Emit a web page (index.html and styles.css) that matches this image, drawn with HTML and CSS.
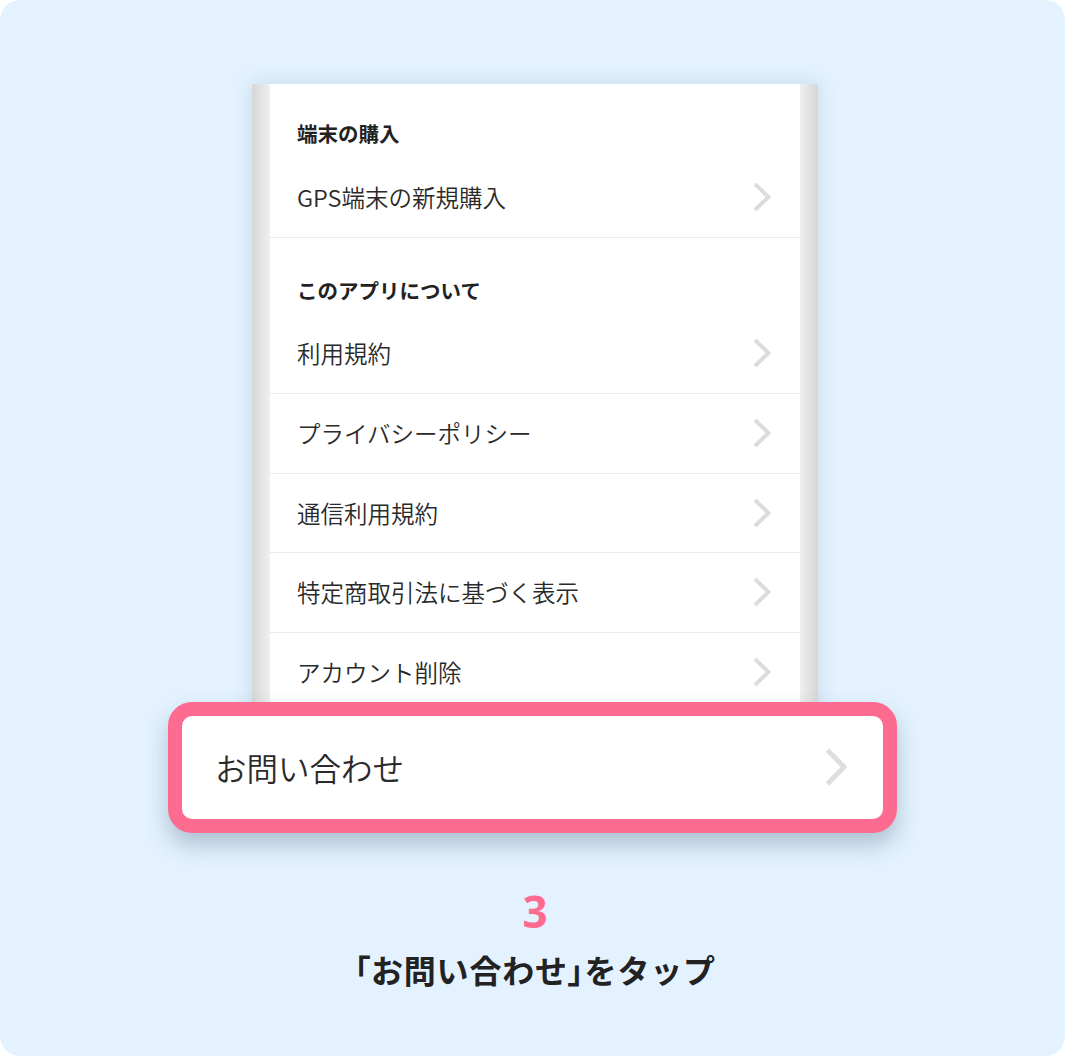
FILE: index.html
```html
<!DOCTYPE html>
<html lang="ja">
<head>
<meta charset="utf-8">
<link rel="stylesheet" href="styles.css">
</head>
<body>
<div class="card">
  <div class="phone">
    <div class="screen">
      <div class="section-title">端末の購入</div>
      <div class="row"><span>GPS端末の新規購入</span><svg class="chev" viewBox="0 0 18 30"><polyline points="2,2 15.5,15 2,28"/></svg></div>
      <div class="section-title">このアプリについて</div>
      <div class="row"><span>利用規約</span><svg class="chev" viewBox="0 0 18 30"><polyline points="2,2 15.5,15 2,28"/></svg></div>
      <div class="row"><span>プライバシーポリシー</span><svg class="chev" viewBox="0 0 18 30"><polyline points="2,2 15.5,15 2,28"/></svg></div>
      <div class="row"><span>通信利用規約</span><svg class="chev" viewBox="0 0 18 30"><polyline points="2,2 15.5,15 2,28"/></svg></div>
      <div class="row"><span>特定商取引法に基づく表示</span><svg class="chev" viewBox="0 0 18 30"><polyline points="2,2 15.5,15 2,28"/></svg></div>
      <div class="row end"><span>アカウント削除</span><svg class="chev" viewBox="0 0 18 30"><polyline points="2,2 15.5,15 2,28"/></svg></div>
    </div>
  </div>
  <div class="highlight">
    <span>お問い合わせ</span>
    <svg class="chev-big" viewBox="0 0 22 38"><polyline points="2.5,2 19,19 2.5,36"/></svg>
  </div>
  <div class="caption">
    <div class="step">3</div>
    <div class="label"><span class="br">「</span>お問い合わせ<span class="br">」</span>をタップ</div>
  </div>
</div>
</body>
</html>
```
FILE: styles.css
```css
* { box-sizing: border-box; }
html, body { margin: 0; padding: 0; background: #ffffff; }
body {
  font-family: "Noto Sans CJK JP", "Noto Sans", sans-serif;
  width: 1065px;
  height: 1056px;
  overflow: hidden;
}
.card {
  width: 1065px;
  height: 1056px;
  background: #e3f2fe;
  border-radius: 20px;
  padding-top: 84px;
  overflow: hidden;
}
.phone {
  width: 566px;
  margin-left: 252px;
  padding: 0 18px;
  background: linear-gradient(to right, #d6d6d6 0, #efefef 18px, #ffffff 18px, #ffffff 548px, #efefef 548px, #d6d6d6 566px);
  box-shadow: 0 0 18px rgba(60, 100, 140, 0.18);
}
.screen {
  background: #ffffff;
  height: 630px;
}
.section-title {
  padding: 37px 0 10px 27px;
  font-size: 20.5px;
  line-height: 30px;
  font-weight: 700;
  color: #222;
}
.section-title:first-child { padding-top: 34px; }
.row {
  height: 79.6px;
  display: flex;
  align-items: center;
  justify-content: space-between;
  padding: 0 29px 1px 27px;
  font-size: 23.5px;
  font-weight: 350;
  color: #2a2a2a;
  border-bottom: 1px solid #ebebeb;
}
.row.end { border-bottom: none; }
.chev {
  width: 18px;
  height: 30px;
  fill: none;
  stroke: #dcdcdc;
  stroke-width: 4;
}
.highlight {
  position: relative;
  z-index: 1;
  margin-top: -12px;
  margin-left: 168px;
  width: 729px;
  height: 131px;
  border: 14px solid #fe6b90;
  border-radius: 24px;
  background: #ffffff;
  box-shadow: 0 12px 22px rgba(50, 80, 110, 0.3);
  display: flex;
  align-items: center;
  justify-content: space-between;
  padding: 0 36px 2px 33px;
  font-size: 31.5px;
  font-weight: 350;
  color: #2a2a2a;
}
.chev-big {
  width: 22px;
  height: 38px;
  fill: none;
  stroke: #dedede;
  stroke-width: 5;
}
.caption {
  padding-left: 5px;
  text-align: center;
}
.step {
  margin-top: 53px;
  font-size: 44px;
  line-height: 50px;
  font-weight: 700;
  color: #fe6b90;
  font-family: "Noto Sans", "Noto Sans CJK JP", sans-serif;
}
.label {
  margin-top: 13px;
  font-size: 32px;
  line-height: 40px;
  font-weight: 700;
  letter-spacing: 0.8px;
  color: #222;
}
.br { font-feature-settings: "palt"; }
```
